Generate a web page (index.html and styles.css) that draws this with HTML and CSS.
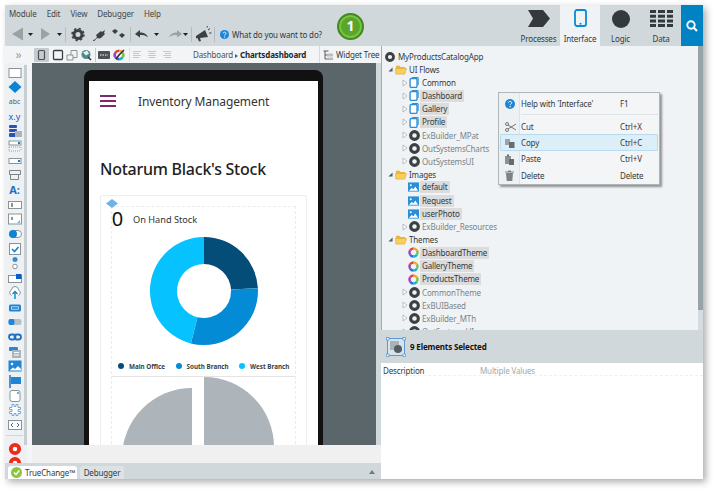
FILE: index.html
```html
<!DOCTYPE html>
<html lang="en">
<head>
<meta charset="utf-8">
<title>Service Studio</title>
<link rel="stylesheet" href="styles.css">
</head>
<body>
<svg class="defs" width="0" height="0" aria-hidden="true">
  <symbol id="ring" viewBox="0 0 12 12"><circle cx="6" cy="6" r="4.200" fill="none" stroke="#3b4043" stroke-width="3.400"/></symbol>
  <symbol id="flow" viewBox="0 0 10 12"><rect x="0.700" y="1.700" width="7.600" height="9.600" rx="1.500" fill="#fff" stroke="#2b8fd8" stroke-width="1.500"/><path d="M3 0.700h5.500a1 1 0 0 1 1 1v7" fill="none" stroke="#2b8fd8" stroke-width="1.200"/></symbol>
  <symbol id="image" viewBox="0 0 12 10"><rect width="12" height="10" fill="#2b8fd8"/><circle cx="3" cy="3" r="1.100" fill="#fff"/><path d="M1 9l3-3 2 1.500 2-3 3 4.500z" fill="#fff"/></symbol>
  <symbol id="theme" viewBox="0 0 12 12"><g fill="none" stroke-width="2.600"><path d="M6 1.700a4.300 4.300 0 0 1 3.700 2.100" stroke="#f6a623"/><path d="M9.700 3.800a4.300 4.300 0 0 1 0 4.400" stroke="#7cc242"/><path d="M9.700 8.200a4.300 4.300 0 0 1-3.700 2.100" stroke="#19b5c9"/><path d="M6 10.300a4.300 4.300 0 0 1-3.700-2.100" stroke="#2b6fd8"/><path d="M2.300 8.200a4.300 4.300 0 0 1 0-4.400" stroke="#a13cc4"/><path d="M2.300 3.800A4.300 4.300 0 0 1 6 1.700" stroke="#e8403a"/></g></symbol>
  <symbol id="folder" viewBox="0 0 13 11"><path d="M1 1.500h4l1 1.300h5v2H1z" fill="#e9b53a"/><path d="M0.500 4.500h12l-2 6H1z" fill="#f8cf5e" stroke="#e2a92c" stroke-width="0.700"/></symbol>
  <symbol id="arrow" viewBox="0 0 6 8"><path d="M1 1l4 3-4 3z" fill="#fff" stroke="#a8b0b4" stroke-width="0.800"/></symbol>
  <symbol id="open" viewBox="0 0 6 6"><path d="M5.500 0.500v5h-5z" fill="#555b5e"/></symbol>
</svg>

<div class="app">
  <header class="topbar">
    <div class="topleft">
      <nav class="menu"><span>Module</span><span>Edit</span><span>View</span><span>Debugger</span><span>Help</span></nav>
      <div class="tools">
        <svg class="toolstrip" width="216" height="18" viewBox="0 0 216 18">
          <path d="M7 9l11-6.500v13z" fill="#9aa2a6"/><path d="M23 8h5l-2.500 3z" fill="#222"/>
          <path d="M36 3l9 6-9 6z" fill="#9aa2a6"/><path d="M52 8h5l-2.500 3z" fill="#222"/>
          <path d="M60.500 2v15" stroke="#b4bcc0"/>
          <circle cx="73" cy="9.500" r="4" fill="none" stroke="#3b4043" stroke-width="3"/><circle cx="73" cy="9.500" r="6" fill="none" stroke="#3b4043" stroke-width="1.500" stroke-dasharray="2.300 2.400"/>
          <path d="M88 15c2 0 3-2 4-3l-1-2 5-4 1 1 3-2-1 3 1 1-4 4c-2 1-3 0-4 0-1 1-2 3-4 3z" fill="#3b4043"/>
          <path d="M107 6l3-2 3 2 -3 3zM114 10l3-2 3 2-3 3z" fill="#3b4043"/>
          <path d="M125.500 2v15" stroke="#b4bcc0"/>
          <path d="M130 9l5-4v2.500c4 0 7 1.500 8 5-2-2-4-2.500-8-2.500v2.500z" fill="#3b4043"/><path d="M149 8h5l-2.500 3z" fill="#222"/>
          <path d="M177 9l-5-4v2.500c-4 0-7 1.500-8 5 2-2 4-2.500 8-2.500v2.500z" fill="#9aa2a6"/><path d="M178 8h5l-2.500 3z" fill="#222"/>
          <path d="M186.500 2v15" stroke="#b4bcc0"/>
          <path d="M191 11l9-6 3 7-8 1 1 3-2 .5-1.500-3.500-1.500 .5z" fill="#3b4043"/><path d="M203 5l2-1.500M204 8h2.500M202 2.500l.5-1.500" stroke="#3b4043"/>
          <path d="M209.500 2v15" stroke="#b4bcc0"/>
        </svg>
        <span class="ask">
          <svg class="ask-icon" width="9" height="9" viewBox="0 0 10 10"><circle cx="5" cy="5" r="5" fill="#1b85d6"/><path d="M3.500 3.800c0-2 3.200-2 3.200 0 0 1.200-1.600 1.100-1.600 2.400" fill="none" stroke="#fff"/><circle cx="5.100" cy="7.800" r=".7" fill="#fff"/></svg>
          What do you want to do?
        </span>
      </div>
    </div>
    <div class="tabs">
      <div class="tab tab-processes">
        <svg width="22" height="17" viewBox="0 0 22 17"><path d="M0 0h15l7 8.500-7 8.500H0l5-8.500z" fill="#33393c"/></svg>
        <span>Processes</span>
      </div>
      <div class="tab tab-active">
        <svg width="13" height="18" viewBox="0 0 13 18"><rect x="1" y="1" width="11" height="16" rx="2" fill="none" stroke="#0a8ad4" stroke-width="1.800"/><circle cx="6.500" cy="14.700" r="1" fill="#0a8ad4"/></svg>
        <span>Interface</span>
      </div>
      <div class="tab tab-logic">
        <svg width="18" height="18" viewBox="0 0 18 18"><circle cx="9" cy="9" r="9" fill="#33393c"/></svg>
        <span>Logic</span>
      </div>
      <div class="tab tab-data">
        <svg width="23" height="17" viewBox="0 0 23 17" fill="#33393c"><path d="M0 0h6v3H0zM8 0h7v3H8zM17 0h6v3h-6zM0 4.700h6v3H0zM8 4.700h7v3H8zM17 4.700h6v3h-6zM0 9.400h6v3H0zM8 9.400h7v3H8zM17 9.400h6v3h-6zM0 14h6v3H0zM8 14h7v3H8zM17 14h6v3h-6z"/></svg>
        <span>Data</span>
      </div>
      <div class="search">
        <svg width="12" height="12" viewBox="0 0 12 12"><circle cx="5" cy="5" r="3.700" fill="none" stroke="#fff" stroke-width="1.900"/><path d="M7.800 7.800l3.200 3.200" stroke="#fff" stroke-width="2.200"/></svg>
      </div>
    </div>
    <div class="badge">1</div>
  </header>

  <div class="main">
    <section class="editor">
      <div class="subbar">
        <div class="chev">»</div>
        <svg class="substrip" width="144" height="16" viewBox="0 0 144 16">
          <rect x="2" y="1" width="15" height="14" rx="1" fill="#c5cbce"/>
          <rect x="6.500" y="3.500" width="6" height="9" rx="1" fill="none" stroke="#4b5154" stroke-width="1.200"/>
          <rect x="21.500" y="3.500" width="9" height="9" rx="1" fill="none" stroke="#3b4043" stroke-width="1.300"/>
          <path d="M35 8h6v5h-6zM39 8V3.500h6v7h-4" fill="none" stroke="#8b9397"/>
          <circle cx="54" cy="7.500" r="4.500" fill="#4f8a8b"/><path d="M51 5.500l4-2 2 3-3 2z" fill="#e8eef0"/><path d="M56 10l3 3" stroke="#333" stroke-width="1.500"/>
          <path d="M63.500 1v14" stroke="#c5cbce"/>
          <rect x="66" y="4" width="12" height="8" rx="1" fill="#4b5154"/><path d="M68 8h8" stroke="#fff" stroke-dasharray="1.500 1"/>
          <use href="#theme" x="81" y="2" width="12" height="12"/><path d="M84 12l3-4 5-5" stroke="#333" stroke-width="1.600"/>
          <path d="M97.500 1v14" stroke="#dde2e5"/>
          <path d="M101 4.500h8M101 6.500h6M101 8.500h8M101 10.500h6" stroke="#c3c9cc"/>
          <path d="M116 4.500h8M117 6.500h6M116 8.500h8M117 10.500h6" stroke="#c3c9cc"/>
          <path d="M131 4.500h8M133 6.500h6M131 8.500h8M133 10.500h6" stroke="#c3c9cc"/>
        </svg>
        <div class="crumb">Dashboard <i class="caret"></i> <b>Chartsdashboard</b></div>
        <div class="wtree">
          <svg width="10" height="10" viewBox="0 0 10 10"><path d="M.5 1h5M2 1v8M2 5h8M2 9h8" stroke="#555b5e" fill="none"/><path d="M4 3.500h6v3H4zM4 7.500h6v2H4z" fill="#b9c0c4"/></svg>
          <span>Widget Tree</span>
        </div>
      </div>

      <div class="work">
        <aside class="palette">
          <div class="pal-icons">
            <svg class="pi" viewBox="0 0 14 14"><rect x="1" y="2.500" width="12" height="9" fill="#fff" stroke="#8b9397"/></svg>
            <svg class="pi" viewBox="0 0 14 14"><path d="M7 1l6.500 6L7 13 .5 7z" fill="#0b84d4"/></svg>
            <span class="pi pi-text pi-abc">abc</span>
            <span class="pi pi-text pi-xy">x.y</span>
            <svg class="pi" viewBox="0 0 14 14"><rect x="1" y="1" width="8" height="3" rx="1" fill="#2754b8"/><rect x="1" y="5" width="8" height="3" rx="1" fill="#2754b8"/><rect x="1" y="9" width="8" height="4" rx="1" fill="#2754b8"/><rect x="7" y="7" width="7" height="6" fill="#aeb5b9"/></svg>
            <svg class="pi" viewBox="0 0 14 14"><rect x="1" y="2" width="12" height="4" fill="#fff" stroke="#8b9397"/><path d="M1 8h12M1 12h12M1 8v4M13 8v4" stroke="#6fb1de" stroke-dasharray="1 1" fill="none"/><path d="M10 3h2v2h-2z" fill="#0b84d4"/></svg>
            <svg class="pi" viewBox="0 0 14 14"><rect x="1" y="4.500" width="12" height="5" fill="#fff" stroke="#8b9397"/><path d="M10 6h2v2h-2z" fill="#0b84d4"/></svg>
            <svg class="pi" viewBox="0 0 14 14"><path d="M1.500 2.500h11v4h-11zM2.500 6.500v5h8v-5" fill="none" stroke="#7b8387"/></svg>
            <span class="pi pi-text pi-a">A:</span>
            <svg class="pi" viewBox="0 0 14 14"><rect x=".5" y="3.500" width="13" height="7" fill="#fff" stroke="#8b9397"/><path d="M3 5h2v4H3z" fill="#8b9397"/></svg>
            <svg class="pi" viewBox="0 0 14 14"><rect x=".5" y="2" width="13" height="10" fill="#fff" stroke="#8b9397"/><path d="M3 5h2v3H3z" fill="#8b9397"/><path d="M9 11l3-3v3z" fill="#6fb1de"/></svg>
            <svg class="pi" viewBox="0 0 14 14"><rect x="2.500" y="3.500" width="11" height="7" rx="3.500" fill="#fff" stroke="#8b9397"/><circle cx="5" cy="7" r="4" fill="#0b84d4"/></svg>
            <svg class="pi" viewBox="0 0 14 14"><rect x="1.500" y="1.500" width="11" height="11" fill="#fff" stroke="#8b9397"/><path d="M4 7l2.500 2.500L10.500 5" fill="none" stroke="#0b84d4" stroke-width="1.600"/></svg>
            <svg class="pi" viewBox="0 0 14 14"><circle cx="7" cy="3.500" r="2.500" fill="#2f8ed4"/><circle cx="7" cy="10.500" r="2.300" fill="#fff" stroke="#8b9397"/></svg>
            <svg class="pi" viewBox="0 0 14 14"><rect x=".5" y="4.500" width="13" height="7" fill="#fff" stroke="#8b9397"/><rect x="8" y="3" width="5.500" height="5" fill="#0b5fc0"/></svg>
            <svg class="pi" viewBox="0 0 14 14"><path d="M3.500 9.500a3 3 0 0 1 0-5.500 3.500 3.500 0 0 1 7 0 3 3 0 0 1 0 5.500" fill="#fff" stroke="#8b9397"/><path d="M7 13V6M4.500 8L7 5.500 9.500 8" fill="none" stroke="#0b84d4" stroke-width="1.400"/></svg>
            <svg class="pi" viewBox="0 0 14 14"><rect x="1" y="3.500" width="12" height="7" rx="1.500" fill="#1f85d4"/><rect x="3.500" y="5.800" width="7" height="2.400" fill="none" stroke="#cfe6f7" stroke-width=".8"/></svg>
            <svg class="pi" viewBox="0 0 14 14"><rect x=".5" y="4" width="13" height="6" rx="2" fill="#b9c0c4"/><rect x=".5" y="4" width="6" height="6" rx="2" fill="#1f85d4"/></svg>
            <svg class="pi" viewBox="0 0 14 14"><g fill="none" stroke="#1f6fc0" stroke-width="1.800"><rect x="1" y="4.500" width="6.500" height="5" rx="2.500"/><rect x="6.500" y="4.500" width="6.500" height="5" rx="2.500"/></g></svg>
            <svg class="pi" viewBox="0 0 14 14"><rect x="1" y="2" width="9" height="4" rx="1" fill="#2a86cf"/><rect x="4" y="5" width="9" height="8" fill="#aeb5b9"/><path d="M6 7.500h5M6 10h5" stroke="#fff"/></svg>
            <svg class="pi" viewBox="0 0 14 14"><rect x=".5" y="1.500" width="13" height="11" fill="#1f85d4"/><circle cx="4" cy="5" r="1.300" fill="#fff"/><path d="M1.500 11.500l3.500-3 2 1.500 3-3 3 3v1.500z" fill="#fff"/></svg>
            <svg class="pi" viewBox="0 0 14 14"><path d="M2 1v13" stroke="#1f6fc0" stroke-width="1.500"/><path d="M3 3h10v7H3z" fill="#1f85d4"/></svg>
            <svg class="pi" viewBox="0 0 14 14"><rect x="2" y="1.500" width="10" height="11" rx="2" fill="#fff" stroke="#8b9397"/><path d="M9 3h2v2H9z" fill="#6fb1de"/></svg>
            <svg class="pi" viewBox="0 0 14 14"><path d="M4 1.500h2v2h2v-2h2v3h2.500v2H10v2h2.500v2H10v2H8v-2H6v2H4v-2H1.500v-2H4v-2H1.500v-2H4z" fill="#fff" stroke="#7aa8d8"/></svg>
            <svg class="pi" viewBox="0 0 14 14"><rect x=".5" y="2.500" width="13" height="9" fill="#fff" stroke="#8b9397"/><path d="M5 5L3 7l2 2M9 5l2 2-2 2" fill="none" stroke="#2f6fae"/></svg>
          </div>
          <div class="pal-sep"></div>
          <svg class="pr" viewBox="0 0 14 14"><circle cx="7" cy="7" r="4.200" fill="#fff" stroke="#f02a1a" stroke-width="3.800"/></svg>
          <svg class="pr" viewBox="0 0 14 14"><circle cx="7" cy="7" r="4.200" fill="#fff" stroke="#f02a1a" stroke-width="3.800"/></svg>
        </aside>

        <div class="stage">
          <div class="canvas-row">
            <div class="canvas">
              <div class="device">
                <div class="screen">
                  <div class="apphead">
                    <div class="burger"><i></i><i></i><i></i></div>
                    <div class="apptitle">Inventory Management</div>
                  </div>
                  <h1 class="pagetitle">Notarum Black's Stock</h1>
                  <div class="card">
                    <svg class="diamond" width="12" height="9" viewBox="0 0 12 9"><path d="M6 0l6 4.500L6 9 0 4.500z" fill="#6db3e8"/></svg>
                    <div class="inner">
                      <div class="stock"><span class="num">0</span><span class="stocklabel">On Hand Stock</span></div>
                      <svg class="donut" width="110" height="110" viewBox="-55 -55 110 110">
                        <path d="M0-54A54 54 0 0 1 53.900-2.800L27-1.400A27 27 0 0 0 0-27z" fill="#034d78"/>
                        <path d="M53.900-2.800A54 54 0 0 1-13.100 52.400L-6.500 26.200A27 27 0 0 0 27-1.400z" fill="#048bd6"/>
                        <path d="M-13.100 52.400A54 54 0 0 1 0-54V-27A27 27 0 0 0-6.500 26.200z" fill="#06c3ff"/>
                      </svg>
                      <div class="legend">
                        <span class="leg"><i class="dot d1"></i>Main Office</span>
                        <span class="leg"><i class="dot d2"></i>South Branch</span>
                        <span class="leg"><i class="dot d3"></i>West Branch</span>
                      </div>
                      <svg class="pie" width="183" height="71" viewBox="0 0 183 70">
                        <path d="M80 11V81H10A70 70 0 0 1 80 11z" fill="#adb5bb"/>
                        <path d="M92 0A70 70 0 0 1 162 70H92z" fill="#adb5bb"/>
                      </svg>
                    </div>
                  </div>
                </div>
              </div>
            </div>
            <div class="vstrip"></div>
          </div>
          <div class="hscroll"></div>
        </div>
      </div>

      <div class="bottomtabs">
        <div class="btab btab-on">
          <svg width="11" height="11" viewBox="0 0 11 11"><circle cx="5.500" cy="5.500" r="5.500" fill="#8cc63f"/><path d="M3 5.500l2 2 3.300-4" fill="none" stroke="#fff" stroke-width="1.400"/></svg>
          <span>TrueChange™</span>
        </div>
        <div class="btab btab-off">Debugger</div>
        <i class="collapse"></i>
      </div>
    </section>

    <section class="side">
      <div class="treewrap">
        <div class="tree">
          <div class="row l0"><svg class="ic"><use href="#ring"/></svg><span>MyProductsCatalogApp</span></div>
          <div class="row l1"><svg class="tw"><use href="#open"/></svg><svg class="fo"><use href="#folder"/></svg><span>UI Flows</span></div>
          <div class="row l2"><svg class="ar"><use href="#arrow"/></svg><svg class="ic ic-f"><use href="#flow"/></svg><span>Common</span></div>
          <div class="row l2"><svg class="ar"><use href="#arrow"/></svg><svg class="ic ic-f"><use href="#flow"/></svg><span class="hl">Dashboard</span></div>
          <div class="row l2"><svg class="ar"><use href="#arrow"/></svg><svg class="ic ic-f"><use href="#flow"/></svg><span class="hl">Gallery</span></div>
          <div class="row l2"><svg class="ar"><use href="#arrow"/></svg><svg class="ic ic-f"><use href="#flow"/></svg><span class="hl">Profile</span></div>
          <div class="row l2 mod"><svg class="ar"><use href="#arrow"/></svg><svg class="ic"><use href="#ring"/></svg><span>ExBuilder_MPat</span></div>
          <div class="row l2 mod"><svg class="ar"><use href="#arrow"/></svg><svg class="ic"><use href="#ring"/></svg><span>OutSystemsCharts</span></div>
          <div class="row l2 mod"><svg class="ar"><use href="#arrow"/></svg><svg class="ic"><use href="#ring"/></svg><span>OutSystemsUI</span></div>
          <div class="row l1"><svg class="tw"><use href="#open"/></svg><svg class="fo"><use href="#folder"/></svg><span>Images</span></div>
          <div class="row l3"><svg class="ic ic-i"><use href="#image"/></svg><span class="hl">default</span></div>
          <div class="row l3"><svg class="ic ic-i"><use href="#image"/></svg><span class="hl">Request</span></div>
          <div class="row l3"><svg class="ic ic-i"><use href="#image"/></svg><span class="hl">userPhoto</span></div>
          <div class="row l2 mod"><svg class="ar"><use href="#arrow"/></svg><svg class="ic"><use href="#ring"/></svg><span>ExBuilder_Resources</span></div>
          <div class="row l1"><svg class="tw"><use href="#open"/></svg><svg class="fo"><use href="#folder"/></svg><span>Themes</span></div>
          <div class="row l3"><svg class="ic"><use href="#theme"/></svg><span class="hl">DashboardTheme</span></div>
          <div class="row l3"><svg class="ic"><use href="#theme"/></svg><span class="hl">GalleryTheme</span></div>
          <div class="row l3"><svg class="ic"><use href="#theme"/></svg><span class="hl">ProductsTheme</span></div>
          <div class="row l2 mod"><svg class="ar"><use href="#arrow"/></svg><svg class="ic"><use href="#ring"/></svg><span>CommonTheme</span></div>
          <div class="row l2 mod"><svg class="ar"><use href="#arrow"/></svg><svg class="ic"><use href="#ring"/></svg><span>ExBUIBased</span></div>
          <div class="row l2 mod"><svg class="ar"><use href="#arrow"/></svg><svg class="ic"><use href="#ring"/></svg><span>ExBuilder_MTh</span></div>
          <div class="row l2 mod"><svg class="ar"><use href="#arrow"/></svg><svg class="ic"><use href="#ring"/></svg><span>OutSystemsUI</span></div>
        </div>
        <div class="vscroll"><div class="thumb"></div></div>
      </div>
      <div class="selbar">
        <svg width="20" height="20" viewBox="0 0 20 20"><rect x="1.500" y="1.500" width="17" height="17" fill="#d6e4ee" stroke="#5b9bd0"/><rect x="4" y="4" width="9" height="9" fill="#aab2b6"/><circle cx="12" cy="12" r="4" fill="#555d61"/><g fill="#fff" stroke="#5b9bd0" stroke-width=".8"><rect x=".5" y=".5" width="2.500" height="2.500"/><rect x="17" y=".5" width="2.500" height="2.500"/><rect x=".5" y="17" width="2.500" height="2.500"/><rect x="17" y="17" width="2.500" height="2.500"/></g></svg>
        <b>9 Elements Selected</b>
      </div>
      <div class="props">
        <div class="prop"><span class="pname">Description</span><span class="pval">Multiple Values</span></div>
      </div>

      <div class="ctx">
        <div class="ci"><svg class="cg" width="10" height="10" viewBox="0 0 10 10"><circle cx="5" cy="5" r="5" fill="#1b85d6"/><path d="M3.500 3.800c0-2 3.200-2 3.200 0 0 1.200-1.600 1.100-1.600 2.400" fill="none" stroke="#fff"/><circle cx="5.100" cy="7.800" r=".7" fill="#fff"/></svg><span class="cl">Help with 'Interface'</span><span class="cs">F1</span></div>
        <div class="csep"></div>
        <div class="ci"><svg class="cg" width="11" height="10" viewBox="0 0 11 10"><circle cx="2" cy="2" r="1.500" fill="none" stroke="#777"/><circle cx="2" cy="8" r="1.500" fill="none" stroke="#777"/><path d="M3 3l8 5M3 7l8-5" stroke="#777"/></svg><span class="cl">Cut</span><span class="cs">Ctrl+X</span></div>
        <div class="ci ci-on"><svg class="cg" width="10" height="10" viewBox="0 0 10 10"><path d="M0 1h5v6H0z" fill="#9aa2a6"/><path d="M4 4h5.500v6H4z" fill="#666d70"/></svg><span class="cl">Copy</span><span class="cs">Ctrl+C</span></div>
        <div class="ci"><svg class="cg" width="10" height="11" viewBox="0 0 10 11"><path d="M0 2h6v8H0z" fill="#8b9397"/><path d="M2 .5h2v2H2z" fill="#666d70"/><path d="M4 5h5v6H4z" fill="#666d70"/></svg><span class="cl">Paste</span><span class="cs">Ctrl+V</span></div>
        <div class="ci"><svg class="cg" width="9" height="11" viewBox="0 0 9 11"><path d="M0 1.500h9v1H0zM3 .5h3v1H3zM1 3h7l-.7 8H1.700z" fill="#7b8387"/></svg><span class="cl">Delete</span><span class="cs">Delete</span></div>
      </div>
    </section>
  </div>
</div>
</body>
</html>
```

FILE: styles.css
```css
* { box-sizing: border-box; }
html, body { margin: 0; padding: 0; background: #fff; }
body { font-family: "Noto Sans", "Open Sans", sans-serif; font-size: 8px; letter-spacing: -.15px; color: #33393c; width: 719px; height: 494px; overflow: hidden; padding: 5px 16px 15px 5px; }
.defs { position: absolute; }
svg { display: block; flex: none; }

.app { width: 698px; height: 474px; display: flex; flex-direction: column; background: #fff; box-shadow: 3px 3px 7px rgba(0,0,0,.33); }

.topbar { position: relative; height: 41px; flex: none; display: flex; background: #d1d8db; }
.topleft { flex: 1; min-width: 0; }
.menu { display: flex; height: 16px; align-items: center; padding: 0 0 0 4px; gap: 10px; color: #40474a; }
.tools { display: flex; align-items: center; height: 20px; margin-top: 3px; }
.ask { display: flex; align-items: center; gap: 3px; color: #33393c; }
.ask-icon { margin-left: -1px; }
.badge { position: absolute; left: 332px; top: 8px; width: 27px; height: 27px; border-radius: 50%; background: #5aa62c; border: 2px solid #3f8a1f; box-shadow: inset 0 0 0 2px #7cc242; color: #fff; font-weight: 700; font-size: 14px; letter-spacing: 0; line-height: 22px; text-align: center; }

.tabs { display: flex; flex: none; }
.tab { height: 41px; display: flex; flex-direction: column; align-items: center; justify-content: flex-start; padding-top: 5px; color: #33393c; position: relative; }
.tab span { position: absolute; top: 28px; white-space: nowrap; }
.tab-processes { width: 43px; }
.tab-active { width: 40px; background: #f0f3f6; padding-top: 4px; }
.tab-logic { width: 41px; }
.tab-data { width: 40px; }
.search { width: 22px; height: 41px; background: #0082c3; display: flex; align-items: center; justify-content: center; }

.main { flex: 1; min-height: 0; display: flex; position: relative; }
.editor { width: 376px; flex: none; display: flex; flex-direction: column; }

.subbar { height: 17px; flex: none; display: flex; align-items: center; background: #f2f4f6; position: relative; }
.chev { width: 27px; text-align: center; color: #9aa2a6; font-size: 12px; line-height: 14px; flex: none; }
.crumb { margin-left: 17px; white-space: nowrap; color: #4b5154; width: 126px; flex: none; }
.crumb b { color: #22282b; }
.caret { display: inline-block; width: 0; height: 0; border-left: 3px solid #555b5e; border-top: 2.500px solid transparent; border-bottom: 2.500px solid transparent; }
.wtree { display: flex; align-items: center; gap: 3px; white-space: nowrap; border-left: 1px solid #d4dadd; padding-left: 3px; height: 17px; color: #33393c; }

.work { flex: 1; min-height: 0; display: flex; }
.palette { width: 27px; flex: none; background: #eef1f4; overflow: hidden; position: relative; border-right: 5px solid #f3f5f6; }
.palette::after { content: ""; position: absolute; right: 0; top: 2px; bottom: 18px; width: 3px; background: #c6ced2; }
.pal-icons { display: flex; flex-direction: column; align-items: center; width: 19px; padding-top: 2.500px; gap: .7px; }
.pi { width: 14px; height: 14px; display: block; }
.pi-text { text-align: center; line-height: 14px; white-space: nowrap; font-weight: 400; letter-spacing: 0; }
.pi-abc { font-size: 7px; color: #555b5e; }
.pi-xy { font-size: 9px; color: #2754b8; }
.pi-a { font-size: 11px; font-weight: 700; color: #1f6fc0; }
.pal-sep { height: 1px; width: 17px; margin: 3px 0 6px 1px; background: #cfd5d8; }
.pr { width: 14px; height: 14px; margin: 0 0 0 3px; }

.stage { flex: 1; min-width: 0; display: flex; flex-direction: column; }
.canvas-row { flex: 1; min-height: 0; display: flex; }
.canvas { flex: 1; min-width: 0; background: #5a6669; padding: 7px 0 0 52px; overflow: hidden; }
.vstrip { width: 5px; flex: none; background: #d1d8db; }
.device { width: 239px; height: 400px; background: #111; border-radius: 8px 8px 0 0; padding: 11px 5px 0; }
.screen { background: #fff; height: 100%; padding: 0 11px; overflow: hidden; }
.apphead { display: flex; align-items: center; height: 40px; }
.burger { width: 16px; display: flex; flex-direction: column; gap: 3px; }
.burger i { display: block; height: 2px; background: #7a2a6e; }
.apptitle { margin-left: 22px; font-size: 12px; letter-spacing: -.1px; color: #333; white-space: nowrap; }
.pagetitle { margin: 36px 0 0; font-size: 16px; letter-spacing: -.25px; font-weight: 500; line-height: 24px; color: #222; white-space: nowrap; }
.card { position: relative; width: 207px; margin-top: 14px; height: 300px; border: 1px solid #eee; border-radius: 2px; padding: 10px 10px 0; }
.diamond { position: absolute; left: 5px; top: 3px; }
.inner { width: 185px; border: 1px dashed #ececec; border-bottom: 0; height: 100%; }
.stock { display: flex; align-items: center; height: 24px; letter-spacing: 0; }
.num { font-size: 20px; line-height: 24px; color: #111; width: 13px; text-align: center; margin-left: -1px; margin-right: 9px; }
.stocklabel { font-size: 9.200px; color: #333; }
.donut { margin: 5px 0 0 37px; }
.legend { display: flex; height: 14px; margin: 13px 0 3px; align-items: center; padding-left: 6px; font-size: 6.300px; letter-spacing: 0; font-weight: 700; color: #3a3f42; }
.leg { display: flex; align-items: center; gap: 5px; margin-right: 10.500px; white-space: nowrap; }
.dot { width: 6px; height: 6px; border-radius: 50%; display: block; }
.d1 { background: #034d78; }
.d2 { background: #048bd6; }
.d3 { background: #06c3ff; }
.pie { border-top: 1px solid #e4e4e4; }

.hscroll { height: 18px; flex: none; background: #f0f0f0; }
.bottomtabs { height: 16px; flex: none; display: flex; align-items: flex-end; background: #d1d8db; padding-left: 3px; gap: 3px; position: relative; }
.btab { height: 13px; border-radius: 3px 3px 0 0; display: flex; align-items: center; gap: 3px; color: #33393c; }
.btab-on { background: #fff; padding: 0 3px; width: 69px; }
.btab-off { background: #dde2e5; width: 44px; justify-content: center; }
.collapse { position: absolute; right: 6px; top: 7px; width: 0; height: 0; border-left: 3px solid transparent; border-right: 3px solid transparent; border-bottom: 4px solid #777; }

.side { flex: 1; min-width: 0; display: flex; flex-direction: column; position: relative; }
.treewrap { height: 284px; flex: none; display: flex; background: #eff3f6; overflow: hidden; border-left: 1px solid #a3acb0; }
.tree { flex: 1; padding-top: 4px; overflow: hidden; }
.row { height: 13.100px; display: flex; align-items: center; white-space: nowrap; color: #33393c; }
.l0 { padding-left: 3px; }
.l1 { padding-left: 6px; }
.l2 { padding-left: 20px; }
.l3 { padding-left: 26px; }
.mod { color: #7c8488; }
.ic { width: 11px; height: 11px; margin-right: 2px; }
.l0 .ic { width: 10px; height: 10px; margin-right: 3px; }
.ic-f { width: 10px; margin-right: 3px; }
.l3 .ic { margin-right: 3px; }
.ic-i { height: 10px; }
.tw { width: 5px; height: 5px; margin-right: 2px; }
.fo { width: 12px; height: 11px; margin-right: 2px; }
.ar { width: 6px; height: 8px; margin-right: 1px; }
.hl { background: #dcdcdc; padding: 0 2px; margin-left: -2px; line-height: 12px; }
.vscroll { width: 5px; flex: none; background: #d5dcdf; }
.thumb { height: 264px; background: #96a3a8; }

.selbar { height: 33px; flex: none; background: #d1d8db; display: flex; align-items: center; gap: 4px; padding-left: 5px; color: #111; }
.props { flex: 1; background: #fff; padding: 2px 0 0 2px; }
.prop { display: flex; height: 11px; align-items: center; border-bottom: 1px dashed #eef1f3; }
.pname { width: 97px; color: #33393c; flex: none; }
.pval { color: #a3a9ac; }

.ctx { position: absolute; left: 117px; top: 46px; width: 162px; height: 93px; background: #f3f5f7; border: 1px solid #b0b5b8; box-shadow: 2px 2px 2px rgba(0,0,0,.4); padding-top: 2px; background-image: linear-gradient(90deg, #eef1f3 0, #eef1f3 20px, #dfe3e6 20px, #dfe3e6 21px, transparent 21px); }
.ci { height: 16.300px; display: flex; align-items: center; margin: 0 1px; border: 1px solid transparent; border-radius: 1px; position: relative; }
.ci:first-child { height: 17px; }
.ci-on { background: #dceef8; border-color: #b7dcf0; }
.cg { position: absolute; left: 4px; top: 2.500px; }
.cl { margin-left: 20px; width: 99px; flex: none; }
.cs { white-space: nowrap; }
.csep { height: 1px; background: #dfe3e6; margin: 2px 1px 3px 22px; }
```
